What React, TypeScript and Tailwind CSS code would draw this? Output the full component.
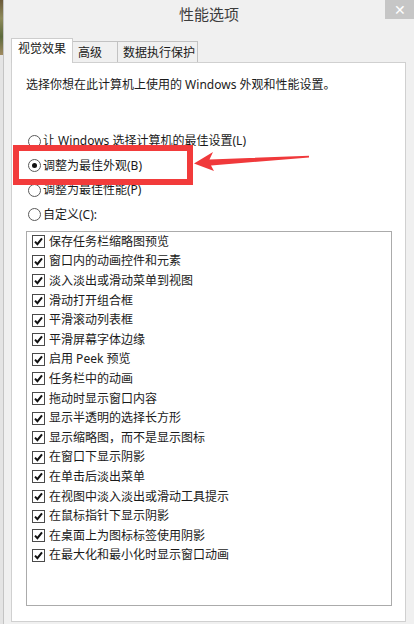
const effects = [
  '保存任务栏缩略图预览',
  '窗口内的动画控件和元素',
  '淡入淡出或滑动菜单到视图',
  '滑动打开组合框',
  '平滑滚动列表框',
  '平滑屏幕字体边缘',
  '启用 Peek 预览',
  '任务栏中的动画',
  '拖动时显示窗口内容',
  '显示半透明的选择长方形',
  '显示缩略图，而不是显示图标',
  '在窗口下显示阴影',
  '在单击后淡出菜单',
  '在视图中淡入淡出或滑动工具提示',
  '在鼠标指针下显示阴影',
  '在桌面上为图标标签使用阴影',
  '在最大化和最小化时显示窗口动画',
];

const options = [
  { label: '让 Windows 选择计算机的最佳设置(L)', checked: false },
  { label: '调整为最佳外观(B)', checked: true },
  { label: '调整为最佳性能(P)', checked: false },
  { label: '自定义(C):', checked: false },
];

function Radio({ checked }: { checked: boolean }) {
  return (
    <span className="flex h-[13px] w-[13px] shrink-0 items-center justify-center rounded-full border border-[#5a5a5a] bg-white">
      {checked && <span className="h-[5px] w-[5px] rounded-full bg-[#111]" />}
    </span>
  );
}

function CheckBox() {
  return (
    <span className="flex h-[13px] w-[13px] shrink-0 items-center justify-center border border-[#4a4a4a] bg-white">
      <svg width="11" height="11" viewBox="0 0 11 11">
        <path d="M2 5.6 L4.4 8.2 L9 2.4" fill="none" stroke="#111" strokeWidth="2" />
      </svg>
    </span>
  );
}

export default function App() {
  return (
    <div className="relative flex h-[624px] w-[414px] overflow-hidden bg-[#f0f0f0] font-['Noto_Sans','Noto_Sans_CJK_SC',sans-serif] text-[12px] text-[#1a1a1a]">
      {/* window behind, peeking out on the left */}
      <div className="flex w-[4px] shrink-0 flex-col border-r border-[#c4c4c4]">
        <div className="h-[55px] bg-[linear-gradient(180deg,#6b5a3a,#8d8a5a,#5c6a3c,#a08a60)]" />
        <div className="flex-1 bg-[#e4e4e4]" />
      </div>

      <div className="flex flex-1 flex-col">
        {/* title bar */}
        <div className="flex h-[30px]">
          <div className="flex-1 pl-[29px] text-center text-[15px] leading-[29px] text-[#3c3c3c]">性能选项</div>
          <div className="flex h-[19px] w-[29px] items-center justify-center bg-[#c6c6c6] text-[14px] leading-none text-white">✕</div>
        </div>

        {/* tabs */}
        <div className="ml-[7px] mt-[8px] flex h-[24px] items-end">
          <div className="relative z-10 -mb-px h-[25px] w-[62px] border border-b-0 border-[#cdcdcd] bg-white pl-[6px] pt-[2px] leading-[16px]">视觉效果</div>
          <div className="h-[21px] w-[45px] border-r border-t border-[#c2c2c2] bg-[#f0f0f0] pl-[5px] pt-[3px] leading-[16px]">高级</div>
          <div className="h-[21px] w-[80px] border-r border-t border-[#c2c2c2] bg-[#f0f0f0] pl-[5px] pt-[3px] leading-[16px]">数据执行保护</div>
        </div>

        {/* tab panel */}
        <div className="ml-[7px] mr-[8px] flex h-[560px] flex-col border border-[#d0d0d0] bg-white pl-[14px] pr-[13px] pt-[14px]">
          <p className="leading-[16px]">选择你想在此计算机上使用的 Windows 外观和性能设置。</p>

          <div className="mt-[36px] flex flex-col">
            {options.map((o) => (
              <div key={o.label} className="flex h-[24.5px] items-center gap-[2px] pl-[2px] leading-[16px]">
                <Radio checked={o.checked} />
                <span>{o.label}</span>
              </div>
            ))}
          </div>

          <div className="mt-[4px] h-[375px] border border-[#ababab] pl-[5px]">
            {effects.map((e) => (
              <div key={e} className="flex h-[19.6px] items-center gap-[4px] leading-[16px]">
                <CheckBox />
                <span>{e}</span>
              </div>
            ))}
          </div>
        </div>
      </div>

      {/* annotation: red highlight box and arrow */}
      <div className="absolute left-[13px] top-[145px] h-[40px] w-[180px] border-[6px] border-[#f23b3b]" />
      <svg className="absolute left-0 top-0" width="414" height="624" viewBox="0 0 414 624">
        <polygon
          points="194,163.5 213,152 209.5,159.5 309,155.8 309,157.4 211,165.5 214,171"
          fill="#f0393b"
        />
      </svg>
    </div>
  );
}
